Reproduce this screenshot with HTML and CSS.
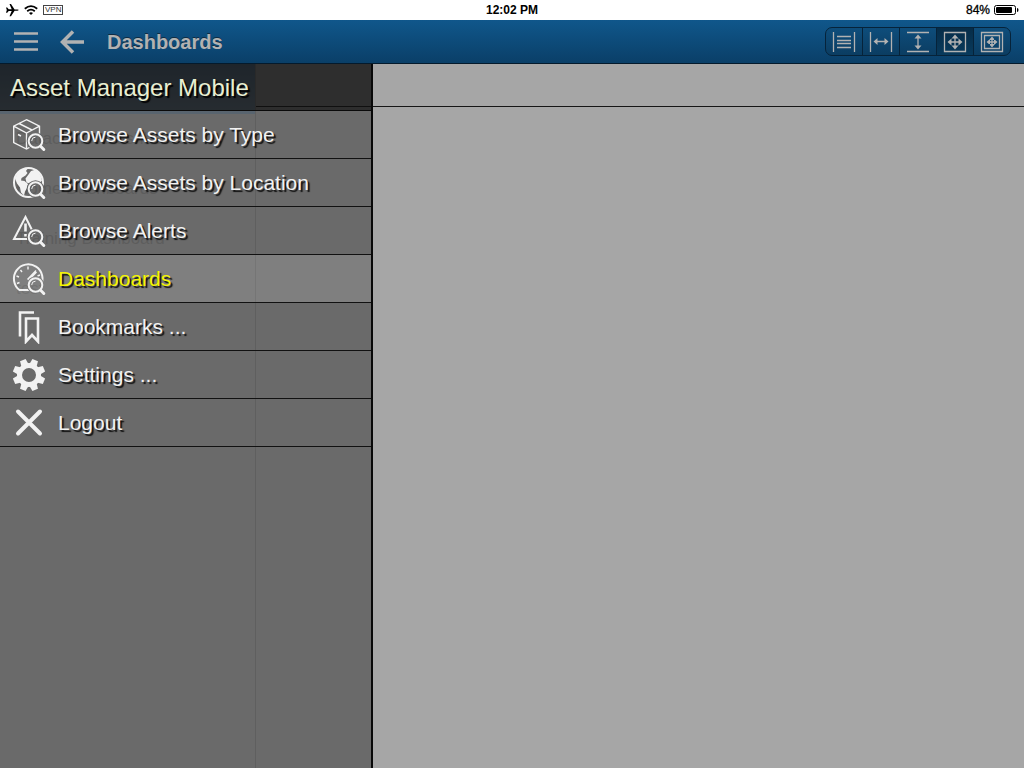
FILE: index.html
```html
<!DOCTYPE html>
<html lang="en">
<head>
<meta charset="utf-8">
<meta name="viewport" content="width=device-width, initial-scale=1">
<title>Asset Manager Mobile</title>
<link rel="stylesheet" href="styles.css">
</head>
<body>
<svg class="defs" width="0" height="0" aria-hidden="true">
  <mask id="cut" maskUnits="userSpaceOnUse" x="0" y="0" width="34" height="34">
    <rect width="34" height="34" fill="#fff"/>
    <circle cx="23.500" cy="23" r="8.800" fill="#000"/>
  </mask>
  <symbol id="lens" viewBox="0 0 34 34">
    <circle cx="23.500" cy="23" r="6.800" fill="none" stroke="#f2f2f2" stroke-width="2"/>
    <path d="M19.700 23a3.800 3.800 0 0 1 3.800-3.800" fill="none" stroke="#f2f2f2" stroke-width="1"/>
    <path d="M28.600 28.300L31.800 31.500" stroke="#f2f2f2" stroke-width="3" stroke-linecap="round"/>
  </symbol>
</svg>
<div class="status">
  <div class="status-left">
    <svg width="14" height="14" viewBox="0 0 14 14"><path d="M1 4.500h1.200l1.500 1.800h3L4.500 1h1.500l3.600 5.500h2.800q1.400.2 1.400.6t-1.400.6H9.600L6 13.200H4.500l2.200-5.300h-3L2.200 9.700H1l.8-2.600z"/></svg>
    <svg width="14" height="12" viewBox="0 0 14 12" fill="none" stroke="#000" stroke-width="1.800"><path d="M.8 4.800Q7-.6 13.200 4.800M3.200 7.300Q7 4 10.800 7.300"/><path d="M5 9Q7 7.400 9 9L7 11z" fill="#000" stroke="none"/></svg>
    <span class="vpn">VPN</span>
  </div>
  <div class="clock">12:02 PM</div>
  <div class="status-right"><span>84%</span>
    <svg width="25" height="10" viewBox="0 0 25 10"><rect x=".5" y=".5" width="21" height="9" rx="2" fill="none" stroke="#000"/><rect x="2" y="2" width="16" height="6" rx="1"/><path d="M23 3q1.500 0 1.500 2t-1.500 2z"/></svg>
  </div>
</div>
<header class="topbar">
  <button class="icon-btn" aria-label="Menu"><svg width="24" height="20" viewBox="0 0 24 20" stroke="#b2b2b2" stroke-width="2.500"><path d="M0 1.500h24M0 9.500h24M0 17.500h24"/></svg></button>
  <button class="icon-btn" aria-label="Back"><svg width="24" height="24" viewBox="0 0 24 24" fill="none" stroke="#b2b2b2" stroke-width="3.500"><path d="M2 12h22M13 1.500L2.500 12L13 22.500"/></svg></button>
  <h1 class="title">Dashboards</h1>
  <div class="segments">
    <button class="seg" aria-label="Original size"><svg width="24" height="22" viewBox="0 0 24 22"><path d="M1.500 1v20M22.500 1v20M5 5.500h14M5 9.500h14M5 12.500h14M5 16.500h14"/></svg></button>
    <button class="seg" aria-label="Fit width"><svg width="24" height="22" viewBox="0 0 24 22"><path d="M1.500 1v20M22.500 1v20M7 10.500h10"/><path class="fill" d="M4.500 10.500l4-3.500v7zM19.500 10.500l-4-3.500v7z"/></svg></button>
    <button class="seg" aria-label="Fit height"><svg width="24" height="22" viewBox="0 0 24 22"><path d="M1 1.500h22M1 20.500h22M12 6v10"/><path class="fill" d="M12 3.500l3.500 4h-7zM12 18.500l3.500-4h-7z"/></svg></button>
    <button class="seg active" aria-label="Fit both"><svg width="24" height="22" viewBox="0 0 24 22"><path d="M1.500 1.500h21v19h-21zM7 11h10M12 6v10"/><path class="fill" d="M4.500 11l4-3.500v7zM19.500 11l-4-3.500v7zM12 3.500l3.500 4h-7zM12 18.500l3.500-4h-7z"/></svg></button>
    <button class="seg" aria-label="Fill"><svg width="24" height="22" viewBox="0 0 24 22"><path d="M1.500 1.500h21v19h-21zM4.500 4.500h15v13h-15zM9 11h6M12 8v6"/><path class="fill" d="M6.500 11l3.500-3v6zM17.500 11l-3.500-3v6zM12 5.500l3 3.500H9zM12 16.500l3-3.500H9z"/></svg></button>
  </div>
</header>
<main class="stage">
  <section class="list">
    <h2 class="list-head">Dashboards</h2>
    <ul class="list-items">
      <li>Datacenter Dashboard</li>
      <li>Home Dashboards</li>
      <li>Training Dashboard</li>
      <li>test</li>
    </ul>
  </section>
  <section class="detail"><div class="detail-head"></div></section>
  <nav class="drawer">
    <h2 class="drawer-title">Asset Manager Mobile</h2>
    <a class="item" href="#type"><svg class="ico" viewBox="0 0 34 34"><g mask="url(#cut)"><path d="M14.500 1.700L27.500 8.200V24L14.500 31L1.700 24.500V8.200zM1.700 8.200L14.500 15L27.500 8.200M14.500 15V31M7 5.500L20 12M6 16.500l3 1.500"/></g><use href="#lens"/></svg>Browse Assets by Type</a>
    <a class="item" href="#location"><svg class="ico" viewBox="0 0 34 34"><g mask="url(#cut)"><circle class="thick" cx="16.500" cy="16.500" r="14.500"/><path class="solid" d="M6 6.500Q10 2 16 2l-2 3 1.500 2-2 2.500-4 2.500-.5 2.500 3.500.5 3.500 3-1 4-2 3.500-1 4-3-3-1-5-3-4-2-5zM19 5l5-1.500q5 4.500 6 11l-2 2-2.500-1-1.500 6-4 2-2-6-3.500-1-1-4 3-4z"/></g><use href="#lens"/></svg>Browse Assets by Location</a>
    <a class="item" href="#alerts"><svg class="ico" viewBox="0 0 34 34"><g mask="url(#cut)"><path class="thick" d="M20 25H2L13.500 3L22 20"/><path class="bar" d="M13.500 9.500v8M13.500 20v2.500"/></g><use href="#lens"/></svg>Browse Alerts</a>
    <a class="item current" href="#dashboards"><svg class="ico" viewBox="0 0 34 34"><g mask="url(#cut)"><path class="thick" d="M18 28H7.500A14.300 14.300 0 1 1 28.500 24"/><path d="M16 4.500v3M8.500 8l1.500 2M4.500 14l2.500 1M5 21.500l2.500-1M28 13l-2.500 1M15.500 17.500L24 8.500M16.500 18.500L24.500 10"/></g><use href="#lens"/></svg>Dashboards</a>
    <a class="item" href="#bookmarks"><svg class="ico" viewBox="0 0 34 34"><path class="mark" d="M8 26.500V2.500h14M14 8.500h12v23l-6-6.500-6 6.500z"/></svg>Bookmarks ...</a>
    <a class="item" href="#settings"><svg class="ico" viewBox="0 0 34 34"><circle class="ring" cx="17" cy="17" r="9.500"/><g class="solid"><path id="tooth" transform="rotate(22.5 17 17)" d="M13 8L14 .8h6l1 7.200z"/><use href="#tooth" transform="rotate(45 17 17)"/><use href="#tooth" transform="rotate(90 17 17)"/><use href="#tooth" transform="rotate(135 17 17)"/><use href="#tooth" transform="rotate(180 17 17)"/><use href="#tooth" transform="rotate(225 17 17)"/><use href="#tooth" transform="rotate(270 17 17)"/><use href="#tooth" transform="rotate(315 17 17)"/></g></svg>Settings ...</a>
    <a class="item" href="#logout"><svg class="ico" viewBox="0 0 34 34"><path class="cross" d="M6 5.500L28 27.500M28 5.500L6 27.500"/></svg>Logout</a>
  </nav>
</main>
</body>
</html>
```
FILE: styles.css
```css
* { box-sizing: border-box; }
body {
  margin: 0;
  min-height: 100vh;
  display: flex;
  flex-direction: column;
  background: #a6a6a6;
  font-family: "Liberation Sans", Arial, sans-serif;
}
h1, h2, ul { margin: 0; padding: 0; font-weight: normal; }
.defs { position: absolute; }

.status {
  display: grid;
  grid-template-columns: 1fr auto 1fr;
  align-items: center;
  height: 20px;
  padding: 0 5px;
  background: #fff;
  color: #000;
  font-size: 12px;
}
.clock { font-weight: bold; }
.status-left { display: flex; align-items: center; gap: 5px; }
.status-right { display: flex; align-items: center; justify-content: flex-end; gap: 4px; -webkit-text-stroke: 0.3px #000; }
.vpn { border: 1px solid #444; padding: 0 1px; font-size: 8px; line-height: 8px; color: #333; }

.topbar {
  display: flex;
  align-items: center;
  height: 44px;
  padding: 0 13px 0 14px;
  background: linear-gradient(#10578b, #0a3f68);
  border-bottom: 1px solid #041a2c;
}
button { margin: 0; padding: 0; border: 0; background: none; }
.icon-btn { display: flex; width: 26px; margin-right: 20px; }
.title {
  flex: 1;
  color: #b2b2b2;
  font-size: 20px;
  line-height: 24px;
  font-weight: bold;
  text-shadow: 0 -1px 0 #102c44;
  padding-left: 1px;
}
.segments { display: flex; height: 29px; border: 1px solid #06233a; border-radius: 7px; overflow: hidden; background: linear-gradient(#0e4d7b, #0b3d62); }
.seg { width: 37px; display: flex; align-items: center; justify-content: center; border-right: 1px solid #06233a; }
.seg:last-child { width: 36px; border-right: 0; }
.seg.active { background: linear-gradient(#062c48, #083a5c); }
.seg svg { width: 24px; height: 22px; fill: none; stroke: #b2b2b2; stroke-width: 1.3; }
.seg .fill { fill: #b2b2b2; stroke: none; }

.stage { flex: 1; display: flex; position: relative; }
.list { width: 256px; border-right: 1px solid #8e8e8e; }
.list-head {
  height: 50px;
  padding-left: 16px;
  line-height: 50px;
  font-size: 17px;
  color: #607486;
  background: linear-gradient(#5a7a96, #839bb0);
}
.list-items { list-style: none; color: #8b8b8b; font-size: 17px; }
.list-items li { height: 50px; line-height: 50px; padding-left: 16px; }
.detail { flex: 1; }
.detail-head { height: 43px; border-bottom: 1px solid #151515; }

/* The drawer dims the split view that it slides over. */
.drawer {
  position: absolute;
  top: 0;
  bottom: 0;
  left: 0;
  width: 373px;
  border-right: 2px solid #080808;
  background: rgba(52, 52, 52, 0.52);
}
.drawer-title {
  height: 47px;
  padding-left: 10px;
  line-height: 48px;
  font-size: 24px;
  color: #e9efd2;
  background: rgba(0, 0, 0, 0.56);
  border-bottom: 1px solid #0a0a0a;
  text-shadow: 2px 2px 1px #000;
}
.item {
  display: flex;
  align-items: center;
  gap: 12px;
  height: 48px;
  padding-left: 12px;
  border-bottom: 1px solid #111;
  color: #f2f2f2;
  font-size: 21px;
  line-height: 24px;
  text-decoration: none;
  text-shadow: 2px 2px 1px #111;
}
.item.current { color: #f5f500; background: rgba(255, 255, 255, 0.14); }
.ico { width: 34px; height: 34px; fill: none; stroke: #f2f2f2; stroke-width: 1.4; }
.ico .thick { stroke-width: 2; }
.ico .bar { stroke-width: 2.6; }
.ico .mark { stroke-width: 2.6; }
.ico .solid { fill: #f2f2f2; stroke: none; }
.ico .ring { stroke-width: 5; }
.ico .cross { stroke-width: 4; stroke-linecap: round; }
```
